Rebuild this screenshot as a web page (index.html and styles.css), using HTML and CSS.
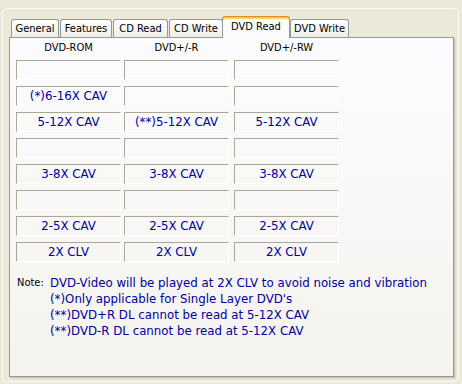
FILE: index.html
```html
<html>
 <head>
  <title>DVD Read</title>
  <meta name='viewport' content='width=device-width,initial-scale=1.0'>
  <link rel="stylesheet" href="styles.css">
 </head>
 <body>
  <div class='frame'>
   <div class='tabs'>
    <div class='tab t1'>General</div>
    <div class='tab t2'>Features</div>
    <div class='tab t3'>CD Read</div>
    <div class='tab t4'>CD Write</div>
    <div class='tab t5 on'>DVD Read</div>
    <div class='tab t6'>DVD Write</div>
   </div>
   <div class='panel'>
    <div class='grid'>
     <div class='col'>
      <div class='head'>DVD-ROM</div>
      <div class='box'></div>
      <div class='box'>(*)6-16X CAV</div>
      <div class='box'>5-12X CAV</div>
      <div class='box'></div>
      <div class='box'>3-8X CAV</div>
      <div class='box'></div>
      <div class='box'>2-5X CAV</div>
      <div class='box'>2X CLV</div>
     </div>
     <div class='col'>
      <div class='head'>DVD+/-R</div>
      <div class='box'></div>
      <div class='box'></div>
      <div class='box'>(**)5-12X CAV</div>
      <div class='box'></div>
      <div class='box'>3-8X CAV</div>
      <div class='box'></div>
      <div class='box'>2-5X CAV</div>
      <div class='box'>2X CLV</div>
     </div>
     <div class='col last'>
      <div class='head'>DVD+/-RW</div>
      <div class='box'></div>
      <div class='box'></div>
      <div class='box'>5-12X CAV</div>
      <div class='box'></div>
      <div class='box'>3-8X CAV</div>
      <div class='box'></div>
      <div class='box'>2-5X CAV</div>
      <div class='box'>2X CLV</div>
     </div>
    </div>
    <div class='note'>
     <div class='label'>Note:</div>
     <div class='lines'>
      <div>DVD-Video will be played at 2X CLV to avoid noise and vibration</div>
      <div>(*)Only applicable for Single Layer DVD's</div>
      <div>(**)DVD+R DL cannot be read at 5-12X CAV</div>
      <div>(**)DVD-R DL cannot be read at 5-12X CAV</div>
     </div>
    </div>
   </div>
  </div>
 </body>
</html>
```
FILE: styles.css
```css
* {box-sizing:border-box; font-family:"DejaVu Sans Condensed", "Liberation Sans", sans-serif; font-size:11px}
body {margin:0; background:#ECE9D8; width:462px; height:384px; overflow:hidden}
.frame {margin:8px 3px 0 2px; height:374px; border:1px solid #FBFAF5; border-radius:4px; padding:7px 0 0 6px}
.tabs {display:flex; align-items:flex-end; height:22px; margin-bottom:-1px; padding-left:2px; position:relative; z-index:1}
.tab {height:18px; margin:0 1px 1px 0; border:1px solid #919B9C; border-bottom:none; border-radius:3px 3px 0 0; background:linear-gradient(#FEFEFE, #EEEDE7); color:#000; text-align:center; line-height:17px; white-space:nowrap}
.t1 {width:48px}
.t2 {width:52px}
.t3 {width:55px}
.t4 {width:54px}
.t5 {width:68px}
.t6 {width:59px}
.tab.on {height:22px; margin:0 0 0 -2px; background:#FCFCFE; border-top:none; box-shadow:inset 0 1px 0 #E68B2C, inset 0 2px 0 #FFC73C, inset 0 3px 0 #FFD56A; padding-top:3px; line-height:16px; position:relative; z-index:2}
.panel {width:445px; height:340px; border:1px solid #919B9C; background:linear-gradient(#FCFCFE, #F4F3EE); box-shadow:1px 1px 0 #C9C7BA, 2px 2px 0 #DEDBCB; padding:3px 0 0 6px}
.grid {display:flex; gap:3px}
.col {width:105px; display:flex; flex-direction:column}
.col.last {margin-left:2px}
.head {height:13px; line-height:13px; margin-bottom:6px; text-align:center; color:#000}
.box {height:20px; margin-bottom:6px; border:1px solid #fff; border-top-color:#ACA899; border-left-color:#ACA899; line-height:18px; text-align:center; color:#0000A0; font-family:"DejaVu Sans", sans-serif; font-size:11.8px}
.note {display:flex; margin:7px 0 0 1px}
.label {width:33px; line-height:16px; color:#000}
.lines div {line-height:16px; color:#0000A0; white-space:nowrap; font-family:"DejaVu Sans", sans-serif; font-size:11.8px}
```
